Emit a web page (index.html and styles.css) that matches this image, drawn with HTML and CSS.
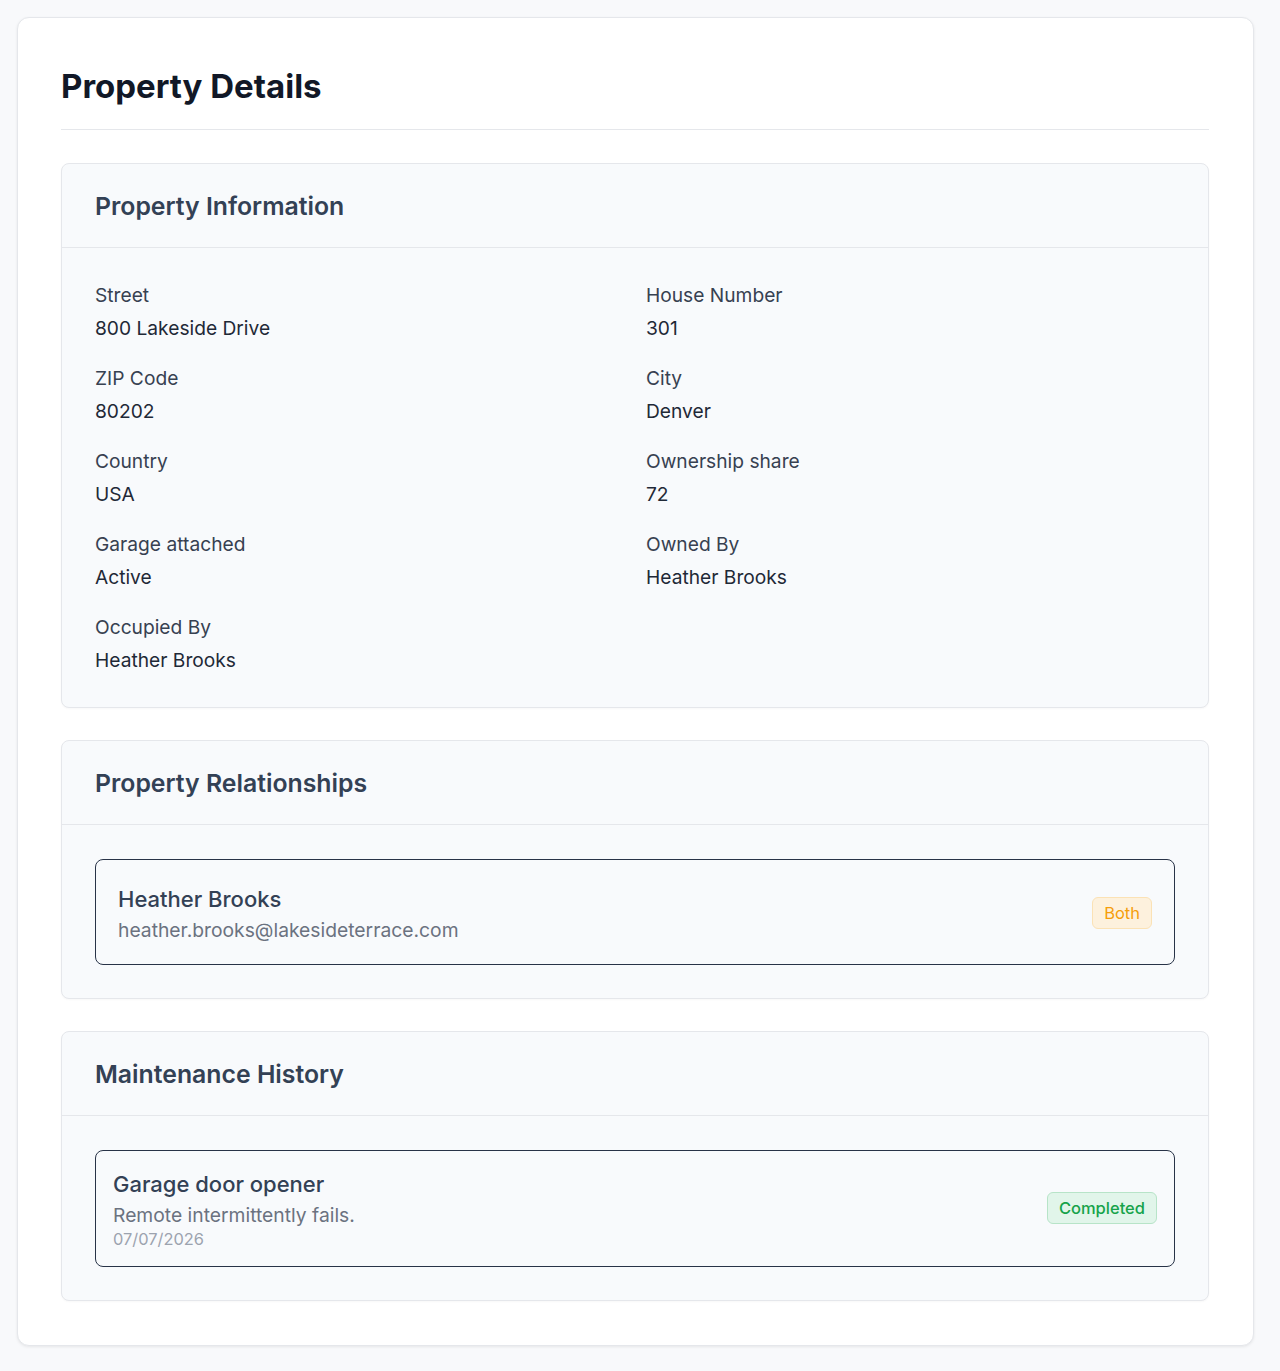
FILE: index.html
```
<!DOCTYPE html>
<html lang="en">
<head>
    <meta charset="UTF-8">
    <meta name="viewport" content="width=device-width, initial-scale=1.0">
    <title>Property Details</title>
    <link rel="stylesheet" href="styles.css">
</head>
<body>
    <div class="page-card">
        <h1 class="page-title">Property Details</h1>

        <section class="panel">
            <h2 class="panel-header">Property Information</h2>
            <div class="panel-body info-grid">
                <div class="field">
                    <div class="field-label">Street</div>
                    <div class="field-value">800 Lakeside Drive</div>
                </div>
                <div class="field">
                    <div class="field-label">House Number</div>
                    <div class="field-value">301</div>
                </div>
                <div class="field">
                    <div class="field-label">ZIP Code</div>
                    <div class="field-value">80202</div>
                </div>
                <div class="field">
                    <div class="field-label">City</div>
                    <div class="field-value">Denver</div>
                </div>
                <div class="field">
                    <div class="field-label">Country</div>
                    <div class="field-value">USA</div>
                </div>
                <div class="field">
                    <div class="field-label">Ownership share</div>
                    <div class="field-value">72</div>
                </div>
                <div class="field">
                    <div class="field-label">Garage attached</div>
                    <div class="field-value">Active</div>
                </div>
                <div class="field">
                    <div class="field-label">Owned By</div>
                    <div class="field-value">Heather Brooks</div>
                </div>
                <div class="field">
                    <div class="field-label">Occupied By</div>
                    <div class="field-value">Heather Brooks</div>
                </div>
            </div>
        </section>

        <section class="panel">
            <h2 class="panel-header">Property Relationships</h2>
            <div class="panel-body">
                <div class="item relation">
                    <div class="item-text">
                        <div class="item-title">Heather Brooks</div>
                        <div class="item-sub">heather.brooks@lakesideterrace.com</div>
                    </div>
                    <span class="badge badge-both">Both</span>
                </div>
            </div>
        </section>

        <section class="panel">
            <h2 class="panel-header">Maintenance History</h2>
            <div class="panel-body">
                <div class="item maintenance">
                    <div class="item-text">
                        <div class="item-title">Garage door opener</div>
                        <div class="item-sub">Remote intermittently fails.</div>
                        <div class="item-date">07/07/2026</div>
                    </div>
                    <span class="badge badge-done">Completed</span>
                </div>
            </div>
        </section>
    </div>
</body>
</html>
```

FILE: styles.css
```
* {
    box-sizing: border-box;
}

body {
    margin: 0;
    padding: 17px;
    font-family: Inter, "Noto Sans", Arial, sans-serif;
    background-color: #f8f9fb;
    color: #111827;
}

.page-card {
    width: 1237px;
    background-color: #fff;
    border: 1px solid #e5e7eb;
    border-radius: 12px;
    box-shadow: 0 1px 3px rgba(0, 0, 0, 0.08);
    padding: 44px 44px 44px 43px;
}

.page-title {
    margin: 0 0 33px;
    padding-bottom: 19px;
    border-bottom: 1px solid #e5e7eb;
    font-size: 33px;
    line-height: 48px;
    font-weight: 700;
    color: #111827;
}

.panel {
    background-color: #f8fafc;
    border: 1px solid #e5e7eb;
    border-radius: 8px;
    box-shadow: 0 1px 2px rgba(0, 0, 0, 0.03);
    margin-bottom: 32px;
}

.panel:last-child {
    margin-bottom: 0;
}

.panel-header {
    margin: 0;
    padding: 24px 33px 23px;
    border-bottom: 1px solid #e5e7eb;
    font-size: 24.8px;
    line-height: 36px;
    font-weight: 600;
    color: #334155;
}

.panel-body {
    padding: 34px 33px 33px;
}

.info-grid {
    display: grid;
    grid-template-columns: 1fr 1fr;
    column-gap: 22px;
    row-gap: 23px;
}

.field-label {
    font-size: 19.2px;
    line-height: 27px;
    color: #374151;
    margin-bottom: 6px;
}

.field-value {
    font-size: 19.2px;
    line-height: 27px;
    color: #1f2937;
}

.item {
    display: flex;
    align-items: center;
    justify-content: space-between;
    border: 1px solid #283347;
    border-radius: 8px;
    background-color: #f8fafc;
}

.relation {
    padding: 22px 22px 20px;
}

.relation .item-title {
    line-height: 30px;
    margin-top: 2px;
    margin-bottom: 2px;
}

.relation .item-sub {
    line-height: 28px;
}

.maintenance {
    padding: 17px 17px 18px;
}

.item-title {
    font-size: 22px;
    line-height: 32px;
    font-weight: 500;
    color: #334155;
}

.item-sub {
    font-size: 19.3px;
    line-height: 30px;
    color: #6b7280;
}

.item-date {
    font-size: 16.4px;
    line-height: 18px;
    color: #9ca3af;
}

.badge {
    display: inline-block;
    font-size: 16.5px;
    line-height: 20px;
    padding: 5px 11px;
    border-radius: 6px;
    border: 1px solid;
}

.badge-both {
    background-color: #fdf1dd;
    border-color: #fbe2b5;
    color: #f59e0b;
}

.badge-done {
    background-color: #e1f5ea;
    border-color: #b7e4c8;
    color: #16a34a;
    font-weight: 500;
}
```
